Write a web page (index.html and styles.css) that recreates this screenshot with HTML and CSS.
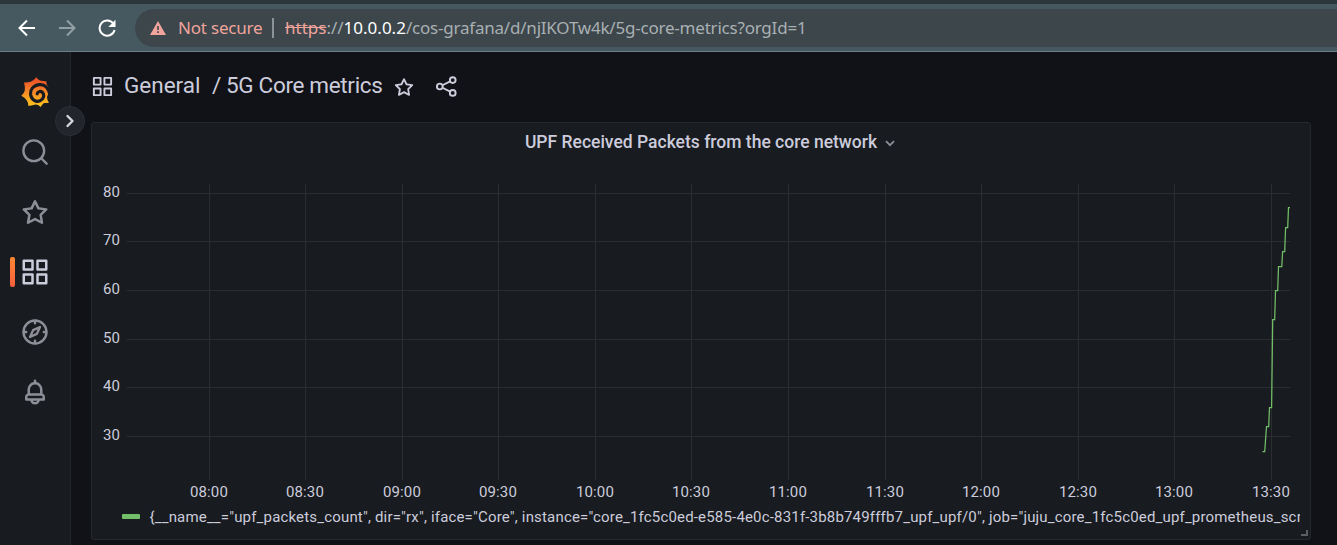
FILE: index.html
```
<!DOCTYPE html>
<html lang="en">
<head>
<meta charset="utf-8">
<title>5G Core metrics</title>
<link rel="stylesheet" href="styles.css">
</head>
<body>
<svg class="defs" width="0" height="0">
  <symbol id="star" viewBox="0 0 24 24"><path fill="currentColor" d="M22,9.67A1,1,0,0,0,21.14,9l-5.69-.83L12.9,3a1,1,0,0,0-1.8,0L8.55,8.16,2.86,9a1,1,0,0,0-.81.68,1,1,0,0,0,.25,1l4.13,4-1,5.68A1,1,0,0,0,6.9,21.44L12,18.77l5.1,2.67a.93.93,0,0,0,.46.12,1,1,0,0,0,.59-.19,1,1,0,0,0,.4-1l-1-5.68,4.13-4A1,1,0,0,0,22,9.67Zm-6.15,4a1,1,0,0,0-.29.88l.72,4.2-3.76-2a1.06,1.06,0,0,0-.94,0l-3.76,2,.72-4.2a1,1,0,0,0-.29-.88l-3-3,4.21-.61a1,1,0,0,0,.76-.55L12,5.7l1.88,3.82a1,1,0,0,0,.76.55l4.21.61Z"/></symbol>
  <symbol id="apps" viewBox="0 0 24 24"><path fill="none" stroke="currentColor" stroke-width="2" stroke-linejoin="round" d="M3 3h7v7H3zM14 3h7v7h-7zM3 14h7v7H3zM14 14h7v7h-7z"/></symbol>
</svg>

<header class="browser">
  <nav class="browser-nav">
    <svg class="nav-icon" viewBox="0 0 18 18"><path d="M17 9H2M9 1.500L1.500 9L9 16.500"/></svg>
    <svg class="nav-icon dim" viewBox="0 0 18 18"><path d="M1 9H16M9 1.500L16.500 9L9 16.500"/></svg>
    <svg class="nav-icon" viewBox="0 0 18 18"><path d="M15.300 4.500A7.600 7.600 0 1 0 16.600 11"/><path class="solid" d="M17.500.8V8H10.300z"/></svg>
  </nav>
  <div class="address">
    <svg class="warn" viewBox="0 0 16 14"><path fill="#f0a49c" d="M8 0L16 14H0z"/><path stroke="#3c464b" stroke-width="1.600" d="M8 5v4M8 10.300v1.700"/></svg>
    <span class="insecure">Not secure</span>
    <span class="divider"></span>
    <span class="url"><span class="scheme">https</span><span class="sep">://</span><span class="host">10.0.0.2</span><span class="path">/cos-grafana/d/njIKOTw4k/5g-core-metrics?orgId=1</span></span>
  </div>
</header>

<div class="app">
  <aside class="sidebar">
    <div class="side-item logo">
      <svg width="30" height="31" viewBox="0 0 30 31">
        <defs><linearGradient id="sun" x1="0" y1="0" x2="0" y2="1"><stop offset="0.1" stop-color="#ed5529"/><stop offset="0.500" stop-color="#f58a28"/><stop offset="1" stop-color="#fcc91a"/></linearGradient></defs>
        <path fill="url(#sun)" d="M15.300.3Q17 3 19 3.500Q22 4.300 25.300 4.200Q25.300 6.500 26 8Q28.500 11 28 15L26 20Q26 23 28 25.700Q25 26.200 23 26Q21 27.500 19.700 30Q17 27.500 14.500 27.600Q11 29 7.300 28.700Q7.300 25.500 5.800 23.500Q4 20.500.3 18.700Q3.300 16 3.800 13.500Q4.200 9.500 3 5.500Q6.500 5.700 9.700 4.700Q13 3.500 15.300.3Z"/>
        <path fill="none" stroke="#181b1f" stroke-width="3.200" stroke-linecap="round" d="M28.800 17C27 9.500 22.500 7 18 7.700C12 8.700 9 13 9.700 18C10.600 23 15 25.300 19 23.800C22.500 22.300 23.600 18.500 21.800 15.800C20 13.500 16.700 14.200 16.200 16.800"/>
      </svg>
    </div>
    <div class="side-item"><svg class="side-icon" viewBox="0 0 24 24"><g fill="none" stroke="currentColor" stroke-width="1.900" stroke-linecap="round"><circle cx="11" cy="11" r="8.300"/><path d="M17 17l4.300 4.300"/></g></svg></div>
    <div class="side-item"><svg class="side-icon"><use href="#star"/></svg></div>
    <div class="side-item active"><svg class="side-icon"><use href="#apps"/></svg></div>
    <div class="side-item"><svg class="side-icon" viewBox="0 0 24 24"><g fill="none" stroke="currentColor" stroke-width="1.900" stroke-linecap="round" stroke-linejoin="round"><circle cx="12" cy="12" r="9.200"/><path d="M12 3v2M12 19v2M3 12h2M19 12h2M16 8L13.500 13.500L8 16L10.500 10.500z"/></g></svg></div>
    <div class="side-item"><svg class="side-icon" viewBox="0 0 24 24"><path fill="currentColor" d="M18,13.180V10a6,6,0,0,0-5-5.910V3a1,1,0,0,0-2,0V4.090A6,6,0,0,0,6,10v3.180A3,3,0,0,0,4,16v2a1,1,0,0,0,1,1H8.140a4,4,0,0,0,7.720,0H19a1,1,0,0,0,1-1V16A3,3,0,0,0,18,13.180ZM8,10a4,4,0,0,1,8,0v3H8Zm4,10a2,2,0,0,1-1.720-1h3.440A2,2,0,0,1,12,20Zm6-3H6V16a1,1,0,0,1,1-1H17a1,1,0,0,1,1,1Z"/></svg></div>
    <div class="expand"><svg width="10" height="14" viewBox="0 0 10 14"><path d="M2.500 2L7.500 7L2.500 12"/></svg></div>
  </aside>

  <main class="main">
    <div class="crumbs">
      <svg class="crumb-apps"><use href="#apps"/></svg>
      <span class="folder">General</span><span class="slash">/</span><span class="dash">5G Core metrics</span>
      <svg class="crumb-star"><use href="#star"/></svg>
      <svg class="crumb-share" viewBox="0 0 24 24"><g fill="none" stroke="currentColor" stroke-width="2"><circle cx="5" cy="12" r="3"/><circle cx="18.500" cy="5.300" r="3"/><circle cx="18.500" cy="18.700" r="3"/><path d="M7.800 10.700L15.800 6.700M7.800 13.300L15.800 17.300"/></g></svg>
    </div>

    <section class="panel">
      <h2 class="panel-title"><span>UPF Received Packets from the core network</span><svg width="10" height="7" viewBox="0 0 10 7"><path d="M1 1.200L5 5.200L9 1.200"/></svg></h2>
      <svg class="chart" width="1218" height="341" viewBox="92 162 1218 341">
        <path class="grid" d="M127 193.500H1290M127 241.500H1290M127 290.500H1290M127 339.500H1290M127 387.500H1290M127 436.500H1290M209.500 184V480M305.500 184V480M402.500 184V480M498.500 184V480M595.500 184V480M691.500 184V480M788.500 184V480M885.500 184V480M981.500 184V480M1078.500 184V480M1174.500 184V480M1271.500 184V480"/>
        <g class="tick y">
          <text x="120" y="197">80</text><text x="120" y="245">70</text><text x="120" y="294">60</text><text x="120" y="343">50</text><text x="120" y="391">40</text><text x="120" y="440">30</text>
        </g>
        <g class="tick x">
          <text x="209" y="497">08:00</text><text x="305" y="497">08:30</text><text x="402" y="497">09:00</text><text x="498" y="497">09:30</text><text x="595" y="497">10:00</text><text x="691" y="497">10:30</text><text x="788" y="497">11:00</text><text x="885" y="497">11:30</text><text x="981" y="497">12:00</text><text x="1078" y="497">12:30</text><text x="1174" y="497">13:00</text><text x="1271" y="497">13:30</text>
        </g>
        <path class="series" d="M1262.500 451.500H1264.700L1266.500 426.500H1268.700L1269.500 407.500H1271.600L1272.700 319.500H1274.700L1275.500 290.500H1277.700L1278.500 266.500H1281.800L1282.600 251.500H1284.700L1285.600 227.500H1287.700L1288.500 207.500H1290"/>
      </svg>
      <div class="legend"><span class="swatch"></span><span class="legend-text">{__name__="upf_packets_count", dir="rx", iface="Core", instance="core_1fc5c0ed-e585-4e0c-831f-3b8b749fffb7_upf_upf/0", job="juju_core_1fc5c0ed_upf_prometheus_scr</span></div>
      <span class="resize"></span>
    </section>
  </main>
</div>
</body>
</html>
```
FILE: styles.css
```
* { box-sizing: border-box; }
body {
  margin: 0;
  width: 1337px;
  height: 545px;
  overflow: hidden;
  display: flex;
  flex-direction: column;
  background: #111217;
  color: #ccccdc;
  font-family: Roboto, sans-serif;
}
svg { display: block; flex: none; }
.defs { position: absolute; }

.browser {
  height: 52px;
  flex: none;
  display: flex;
  padding-top: 5px;
  border-top: 4px solid #2c373c;
  border-bottom: 1px solid #6c7d84;
  background: #475960;
}
.browser-nav {
  width: 135px;
  height: 37px;
  padding-left: 18px;
  display: flex;
  align-items: center;
  gap: 22px;
}
.nav-icon { width: 18px; height: 18px; fill: none; stroke: #fff; stroke-width: 2; }
.nav-icon.dim { stroke: #92a0a6; }
.nav-icon .solid { fill: #fff; stroke: none; }
.address {
  flex: 1;
  height: 38px;
  display: flex;
  align-items: center;
  padding-left: 15px;
  border-radius: 19px 0 0 19px;
  background: #3c464b;
  font: 17px/38px "Noto Sans", sans-serif;
  white-space: nowrap;
}
.warn { width: 16px; height: 14px; }
.insecure { width: 84px; margin-left: 12px; color: #f0a49c; letter-spacing: -0.2px; }
.divider { width: 2px; height: 20px; margin: 0 11px 0 10px; background: #8b9397; }
.url { color: #a9b0b3; }
.scheme { color: #f0a49c; text-decoration: line-through; }
.host { color: #fff; }
.path { letter-spacing: -0.21px; }

.app { flex: 1; display: flex; min-height: 0; }
.sidebar {
  position: relative;
  width: 71px;
  flex: none;
  border-right: 1px solid #24272c;
  background: #181b1f;
  color: #8e8e99;
  padding-top: 10px;
}
.side-item { position: relative; height: 60px; display: flex; align-items: center; justify-content: center; }
.logo { padding-left: 1px; }
.side-icon { width: 30px; height: 30px; }
.active { color: #ccccdc; }
.active::before {
  content: "";
  position: absolute;
  left: 10px;
  top: 15px;
  width: 5px;
  height: 30px;
  border-radius: 2px;
  background: linear-gradient(#ff8833, #f55f3e);
}
.expand {
  position: absolute;
  left: 55px;
  top: 54px;
  width: 30px;
  height: 30px;
  border: 1px solid #2d2f35;
  border-radius: 50%;
  background: #22252b;
  display: flex;
  align-items: center;
  justify-content: center;
}
.expand path { fill: none; stroke: #d5d5e2; stroke-width: 2.4; stroke-linecap: round; stroke-linejoin: round; }

.main { flex: 1; min-width: 0; padding-left: 20px; }
.crumbs {
  height: 70px;
  display: flex;
  align-items: center;
  font-size: 22.5px;
  line-height: 28px;
  white-space: nowrap;
}
.crumbs span { margin-top: -4px; }
.crumb-apps { width: 23px; height: 23px; margin: -1px 10px 0 0; }
.folder { width: 88px; }
.slash { width: 14px; }
.dash { width: 157px; letter-spacing: -0.33px; }
.crumb-star { width: 22px; height: 22px; margin: 0 0 0 10px; }
.crumb-share { width: 23px; height: 23px; margin: -1px 0 0 19.5px; }

.panel {
  position: relative;
  width: 1220px;
  height: 418px;
  border: 1px solid #25282c;
  border-radius: 3px;
  background: #181b1f;
}
.panel-title {
  height: 39px;
  margin: 0;
  padding: 0 0 2px 18px;
  display: flex;
  align-items: center;
  justify-content: center;
  gap: 8px;
  font-size: 17.5px;
  font-weight: 500;
}
.panel-title svg { margin-top: 4px; }
.panel-title path { fill: none; stroke: #8e8e99; stroke-width: 1.8; }
.grid { fill: none; stroke: #2b2e30; }
.tick { font-size: 15px; letter-spacing: 0.1px; fill: #ccccdc; }
.tick.y { text-anchor: end; }
.tick.x { text-anchor: middle; }
.series { fill: none; stroke: #73bf69; stroke-width: 1.25; }
.legend {
  height: 28px;
  width: 1208px;
  padding-left: 30px;
  display: flex;
  align-items: center;
  overflow: hidden;
  font-size: 15px;
  letter-spacing: 0.175px;
  white-space: nowrap;
}
.swatch { width: 18px; height: 5px; margin: -1px 9.5px 0 0; border-radius: 1px; background: #73bf69; flex: none; }
.resize {
  position: absolute;
  right: 2px;
  bottom: 3px;
  width: 7px;
  height: 6px;
  border-right: 2px solid #5c5e62;
  border-bottom: 2px solid #5c5e62;
}
```
